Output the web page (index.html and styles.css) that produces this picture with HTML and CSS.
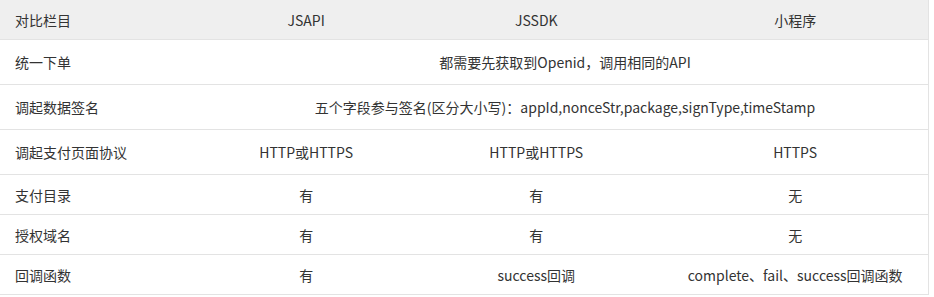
FILE: index.html
```html
<!DOCTYPE html>
<html lang="zh-CN">
<head>
<meta charset="utf-8">
<link rel="stylesheet" href="styles.css">
</head>
<body>
<table class="cmp">
  <colgroup>
    <col class="c1"><col class="c2"><col class="c3"><col class="c4">
  </colgroup>
  <thead>
    <tr class="head">
      <th class="first">对比栏目</th>
      <th>JSAPI</th>
      <th>JSSDK</th>
      <th>小程序</th>
    </tr>
  </thead>
  <tbody>
    <tr class="tall">
      <td class="first">统一下单</td>
      <td colspan="3">都需要先获取到Openid，调用相同的API</td>
    </tr>
    <tr class="tall">
      <td class="first">调起数据签名</td>
      <td colspan="3">五个字段参与签名(区分大小写)：appId,nonceStr,package,signType,timeStamp</td>
    </tr>
    <tr class="tall">
      <td class="first">调起支付页面协议</td>
      <td>HTTP或HTTPS</td>
      <td>HTTP或HTTPS</td>
      <td>HTTPS</td>
    </tr>
    <tr class="short">
      <td class="first">支付目录</td>
      <td>有</td>
      <td>有</td>
      <td>无</td>
    </tr>
    <tr class="short">
      <td class="first">授权域名</td>
      <td>有</td>
      <td>有</td>
      <td>无</td>
    </tr>
    <tr class="short">
      <td class="first">回调函数</td>
      <td>有</td>
      <td>success回调</td>
      <td>complete、fail、success回调函数</td>
    </tr>
  </tbody>
</table>
</body>
</html>
```
FILE: styles.css
```css
html, body {
  margin: 0;
  padding: 0;
  background: #ffffff;
}
body {
  font-family: "Noto Sans CJK SC", "Open Sans", sans-serif;
  font-size: 14px;
  color: #333333;
}
.cmp {
  border-collapse: collapse;
  table-layout: fixed;
  width: 929px;
  border-right: 1px solid #e3e3e3;
}
.c1 { width: 202px; }
.c2 { width: 208px; }
.c3 { width: 252px; }
.c4 { width: 266px; }
.cmp th,
.cmp td {
  padding: 0;
  text-align: center;
  vertical-align: middle;
  font-weight: normal;
  border-bottom: 1px solid #e3e3e3;
  white-space: nowrap;
}
.cmp .first {
  text-align: left;
  padding-left: 15px;
}
.head th {
  background: #efefef;
  height: 39px;
}
.tall td { height: 44px; }
.short td { height: 39px; }
```
